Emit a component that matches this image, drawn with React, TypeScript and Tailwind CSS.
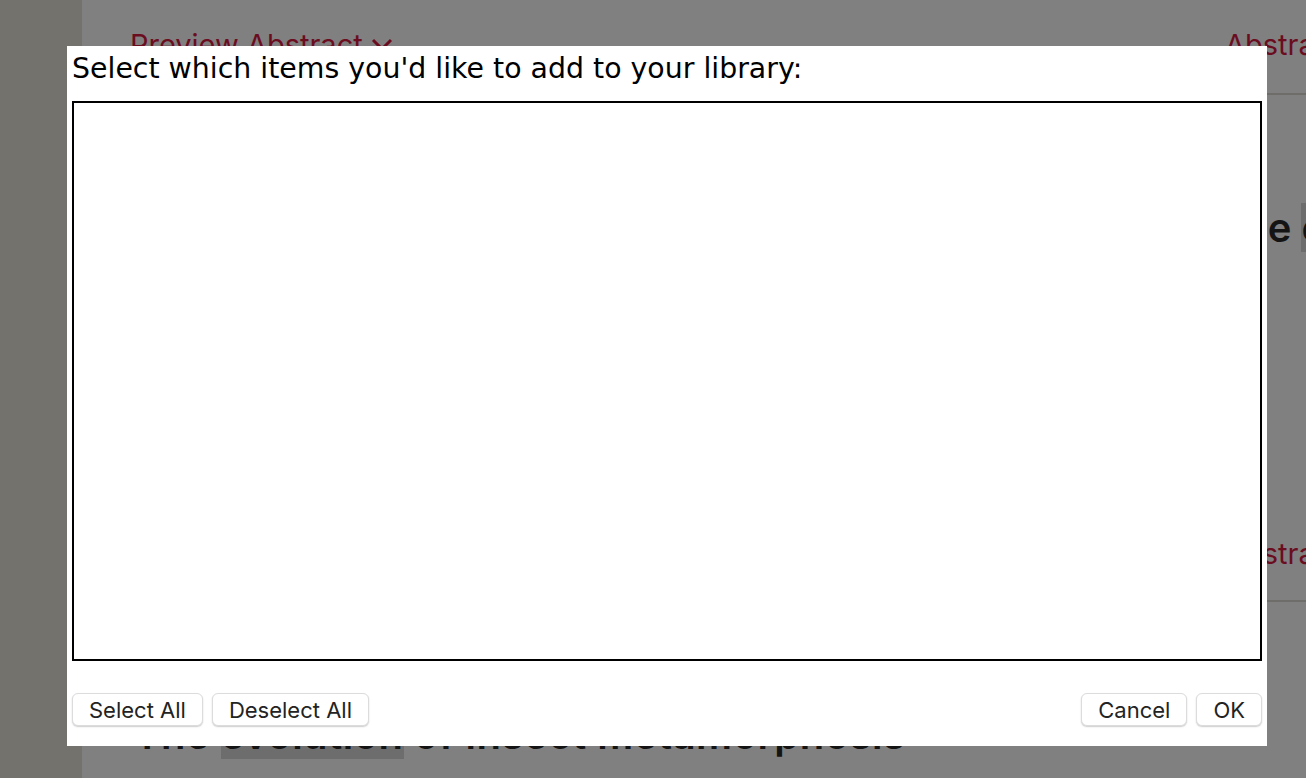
import React from "react";

const red = "text-[#6b0d1f]";

function ItemFooter() {
  return (
    <div className="grid grid-cols-[1095px_1fr] items-center h-[36px]">
      <span className={`flex items-center gap-2 text-[29px] leading-[36px] ${red}`}>
        Preview Abstract
        <svg width="22" height="14" viewBox="0 0 22 14" fill="none">
          <path d="M2 2l9 9 9-9" stroke="currentColor" strokeWidth="3" />
        </svg>
      </span>
      <span className={`text-[29px] leading-[36px] ${red}`}>Abstract</span>
    </div>
  );
}

function Button({ label }: { label: string }) {
  return (
    <button className="h-[33px] px-4 rounded-[6px] bg-white border border-[#dcdcdc] shadow-[0_1px_1.5px_rgba(0,0,0,0.2)] text-[22px] leading-none text-[#232323] font-['Inter',sans-serif]">
      {label}
    </button>
  );
}

export default function App() {
  return (
    <div className="relative w-[1306px] h-[778px] overflow-hidden flex bg-[#808080] font-['Inter','Liberation_Sans',sans-serif]">
      {/* dimmed sidebar */}
      <aside className="w-[82px] shrink-0 bg-[#73726d]" />

      {/* dimmed page behind the dialog */}
      <main className="flex-1 pl-[48px]">
        <div className="w-[1400px]">
          <div className="pt-[27px] pb-[30px] border-b-2 border-[#6f6d6a]">
            <ItemFooter />
          </div>

          <div className="pt-[110px] pb-[28px] border-b-2 border-[#6f6d6a]">
            <div className="grid grid-cols-[1095px_1fr] text-[40px] leading-[46px] font-semibold text-[#141414]">
              <span>Gene regulatory networks</span>
              <span className="pl-[4px] whitespace-nowrap">
                the <span className="bg-[#6d6d6d]">evolution</span>
              </span>
            </div>
            <div className="h-[285px]" />
            <ItemFooter />
          </div>

          <div className="pt-[110px]">
            <div className="pl-[4px] text-[40px] leading-[46px] font-semibold tracking-[0.5px] text-[#141414] whitespace-nowrap">
              The <span className="bg-[#6d6d6d]">evolution</span> of insect metamorphosis
            </div>
          </div>
        </div>
      </main>

      {/* dialog */}
      <div className="absolute left-[67px] top-[46px] w-[1200px] h-[700px] bg-white px-[5px] flex flex-col">
        <h1 className="pt-[6px] h-[55px] text-[28.4px] leading-[34px] text-black font-['DejaVu_Sans',sans-serif]">
          Select which items you'd like to add to your library:
        </h1>
        <div className="h-[560px] border-2 border-black" />
        <div className="mt-[32px] flex items-center justify-between">
          <div className="flex gap-[9px]">
            <Button label="Select All" />
            <Button label="Deselect All" />
          </div>
          <div className="flex gap-[9px]">
            <Button label="Cancel" />
            <Button label="OK" />
          </div>
        </div>
      </div>
    </div>
  );
}
